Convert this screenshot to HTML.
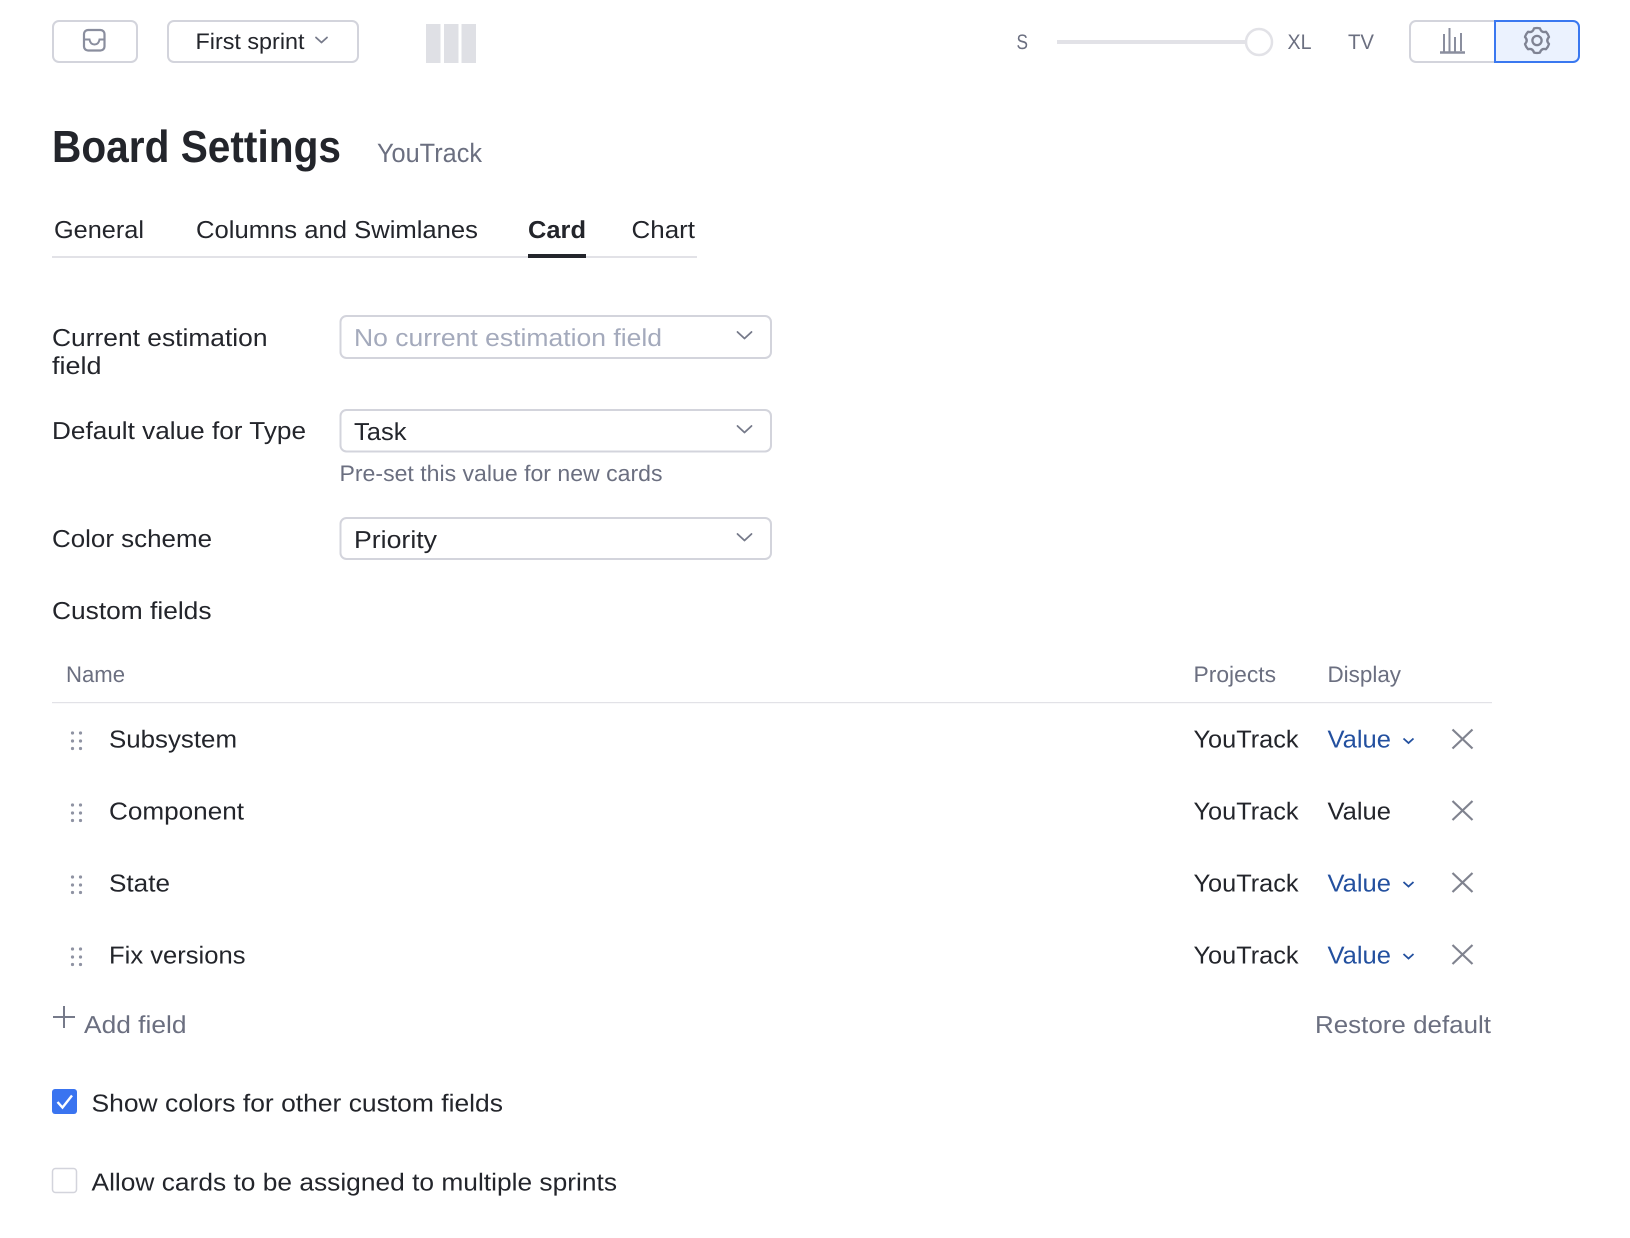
<!DOCTYPE html>
<html lang="en">
<head>
<meta charset="utf-8">
<title>Board Settings</title>
<style>
html,body{margin:0;padding:0;background:#fff;width:1630px;height:1238px;overflow:hidden}
svg{display:block}
text{font-family:"Liberation Sans",sans-serif;font-size:24.5px;fill:#23252b;text-rendering:geometricPrecision}
.s{fill:#6b6f80}
.b{fill:#23509f}
.f{fill:none;stroke:#d3d4dc;stroke-width:2}
.c{fill:none;stroke:#767a8a;stroke-width:1.800;stroke-linecap:round;stroke-linejoin:round}
.x{fill:none;stroke:#80838f;stroke-width:2.200}
.d{fill:#8f93a3}
</style>
</head>
<body>
<svg width="1630" height="1238" viewBox="0 0 1630 1238" xmlns="http://www.w3.org/2000/svg">
<rect x="53" y="21" width="84" height="41" rx="6" class="f"/>
<rect x="84" y="30" width="20.500" height="20.500" rx="4" fill="none" stroke="#8a8e9e" stroke-width="2.200"/>
<path d="M84 39.500h5.500c.5 3 2.200 5 5 5s4.500-2 5-5h5.500" fill="none" stroke="#8a8e9e" stroke-width="2"/>
<rect x="168" y="21" width="190" height="41" rx="6" class="f"/>
<text x="195.500" y="49" style="font-size:22.5px" textLength="109" lengthAdjust="spacingAndGlyphs">First sprint</text>
<path d="M316 37.500l5.500 5 5.500-5" class="c"/>
<rect x="426" y="24" width="14.500" height="39" fill="#dfe0e5"/>
<rect x="444" y="24" width="14.500" height="39" fill="#dfe0e5"/>
<rect x="461.500" y="24" width="14.500" height="39" fill="#dfe0e5"/>

<text x="1016.500" y="49" class="s" style="font-size:21px" textLength="11.500" lengthAdjust="spacingAndGlyphs">S</text>
<rect x="1057" y="40" width="190" height="4" fill="#e2e2e7"/>
<circle cx="1259" cy="42" r="13" fill="#fff" stroke="#e2e2e7" stroke-width="2.500"/>
<text x="1287.500" y="49" class="s" style="font-size:21px" textLength="24" lengthAdjust="spacingAndGlyphs">XL</text>
<text x="1348" y="49" class="s" style="font-size:21px" textLength="26" lengthAdjust="spacingAndGlyphs">TV</text>

<path d="M1495 21h-79a6 6 0 0 0-6 6v29a6 6 0 0 0 6 6h79z" class="f"/>
<path d="M1495 21h78a6 6 0 0 1 6 6v29a6 6 0 0 1-6 6h-78z" fill="#ebf2fe" stroke="#3a78f0" stroke-width="2"/>
<g stroke="#8a8e9e" stroke-width="2" fill="none">
<path d="M1444 34v18M1449.500 28v24M1455 37v15M1461 33v18"/>
<path d="M1440 52.500h25" stroke-width="2.500"/>
</g>
<g transform="translate(1537,40.500)" fill="none" stroke="#7f8393" stroke-width="2.300" stroke-linejoin="round">
<circle r="4.600"/>
<path d="M-3-12.100A12.500 12.500 0 0 1 3-12.100Q4.300-7.500 9-8.700A12.500 12.500 0 0 1 12-3.400Q8.600 0 12 3.400A12.500 12.500 0 0 1 9 8.700Q4.300 7.500 3 12.100A12.500 12.500 0 0 1-3 12.100Q-4.300 7.500-9 8.700A12.500 12.500 0 0 1-12 3.400Q-8.600 0-12-3.400A12.500 12.500 0 0 1-9-8.700Q-4.300-7.500-3-12.100Z"/>
</g>

<text x="52" y="162" style="font-size:45px;font-weight:700" textLength="289" lengthAdjust="spacingAndGlyphs">Board Settings</text>
<text x="377" y="162" class="s" style="font-size:26.500px" textLength="105" lengthAdjust="spacingAndGlyphs">YouTrack</text>

<text x="54" y="238" textLength="90" lengthAdjust="spacingAndGlyphs">General</text>
<text x="196" y="238" textLength="282" lengthAdjust="spacingAndGlyphs">Columns and Swimlanes</text>
<text x="528" y="238" style="font-weight:700" textLength="58" lengthAdjust="spacingAndGlyphs">Card</text>
<text x="631.500" y="238" textLength="63.500" lengthAdjust="spacingAndGlyphs">Chart</text>
<rect x="52" y="256" width="645" height="2" fill="#e2e2e7"/>
<rect x="528" y="254" width="58" height="4" fill="#23252b"/>

<text x="52" y="346" textLength="215.500" lengthAdjust="spacingAndGlyphs">Current estimation</text>
<text x="52" y="374" textLength="49.500" lengthAdjust="spacingAndGlyphs">field</text>
<rect x="340.500" y="316" width="430.500" height="42" rx="6" class="f"/>
<text x="354" y="346" style="fill:#a4aabc" textLength="308" lengthAdjust="spacingAndGlyphs">No current estimation field</text>
<path d="M737.500 332l7 6.500 7-6.500" class="c"/>

<text x="52" y="439" textLength="254" lengthAdjust="spacingAndGlyphs">Default value for Type</text>
<rect x="340.500" y="410" width="430.500" height="41.500" rx="6" class="f"/>
<text x="354" y="440" textLength="52.500" lengthAdjust="spacingAndGlyphs">Task</text>
<path d="M737.500 426l7 6.500 7-6.500" class="c"/>
<text x="339.500" y="481" class="s" style="font-size:22.500px" textLength="323" lengthAdjust="spacingAndGlyphs">Pre-set this value for new cards</text>

<text x="52" y="547" textLength="160" lengthAdjust="spacingAndGlyphs">Color scheme</text>
<rect x="340.500" y="518" width="430.500" height="41" rx="6" class="f"/>
<text x="354" y="548" textLength="83" lengthAdjust="spacingAndGlyphs">Priority</text>
<path d="M737.500 534l7 6.500 7-6.500" class="c"/>

<text x="52" y="619" textLength="159.500" lengthAdjust="spacingAndGlyphs">Custom fields</text>

<text x="66" y="682" class="s" style="font-size:22.500px" textLength="59" lengthAdjust="spacingAndGlyphs">Name</text>
<text x="1193.500" y="682" class="s" style="font-size:22.500px" textLength="82.500" lengthAdjust="spacingAndGlyphs">Projects</text>
<text x="1327.500" y="682" class="s" style="font-size:22.500px" textLength="73.500" lengthAdjust="spacingAndGlyphs">Display</text>
<rect x="52" y="702" width="1440" height="1.200" fill="#e2e2e7"/>

<!-- rows -->
<g>
<circle class="d" cx="72.500" cy="733" r="1.600"/><circle class="d" cx="80.500" cy="733" r="1.600"/><circle class="d" cx="72.500" cy="741" r="1.600"/><circle class="d" cx="80.500" cy="741" r="1.600"/><circle class="d" cx="72.500" cy="748.500" r="1.600"/><circle class="d" cx="80.500" cy="748.500" r="1.600"/>
<text x="109" y="747.500" textLength="128" lengthAdjust="spacingAndGlyphs">Subsystem</text>
<text x="1193.500" y="747.500" textLength="105" lengthAdjust="spacingAndGlyphs">YouTrack</text>
<text x="1327.500" y="747.500" class="b" textLength="63.500" lengthAdjust="spacingAndGlyphs">Value</text>
<path d="M1403.500 738.500l5 4.500 5-4.500" fill="none" stroke="#23509f" stroke-width="1.800"/>
<path d="M1452.500 729.500l20 19M1472.500 729.500l-20 19" class="x"/>
</g>
<g>
<circle class="d" cx="72.500" cy="805" r="1.600"/><circle class="d" cx="80.500" cy="805" r="1.600"/><circle class="d" cx="72.500" cy="813" r="1.600"/><circle class="d" cx="80.500" cy="813" r="1.600"/><circle class="d" cx="72.500" cy="820.500" r="1.600"/><circle class="d" cx="80.500" cy="820.500" r="1.600"/>
<text x="109" y="819.500" textLength="135" lengthAdjust="spacingAndGlyphs">Component</text>
<text x="1193.500" y="819.500" textLength="105" lengthAdjust="spacingAndGlyphs">YouTrack</text>
<text x="1327.500" y="819.500" textLength="63.500" lengthAdjust="spacingAndGlyphs">Value</text>
<path d="M1452.500 801l20 19M1472.500 801l-20 19" class="x"/>
</g>
<g>
<circle class="d" cx="72.500" cy="877" r="1.600"/><circle class="d" cx="80.500" cy="877" r="1.600"/><circle class="d" cx="72.500" cy="885" r="1.600"/><circle class="d" cx="80.500" cy="885" r="1.600"/><circle class="d" cx="72.500" cy="892.500" r="1.600"/><circle class="d" cx="80.500" cy="892.500" r="1.600"/>
<text x="109" y="891.500" textLength="61" lengthAdjust="spacingAndGlyphs">State</text>
<text x="1193.500" y="891.500" textLength="105" lengthAdjust="spacingAndGlyphs">YouTrack</text>
<text x="1327.500" y="891.500" class="b" textLength="63.500" lengthAdjust="spacingAndGlyphs">Value</text>
<path d="M1403.500 882l5 4.500 5-4.500" fill="none" stroke="#23509f" stroke-width="1.800"/>
<path d="M1452.500 873l20 19M1472.500 873l-20 19" class="x"/>
</g>
<g>
<circle class="d" cx="72.500" cy="949" r="1.600"/><circle class="d" cx="80.500" cy="949" r="1.600"/><circle class="d" cx="72.500" cy="957" r="1.600"/><circle class="d" cx="80.500" cy="957" r="1.600"/><circle class="d" cx="72.500" cy="964.500" r="1.600"/><circle class="d" cx="80.500" cy="964.500" r="1.600"/>
<text x="109" y="963.500" textLength="136.500" lengthAdjust="spacingAndGlyphs">Fix versions</text>
<text x="1193.500" y="963.500" textLength="105" lengthAdjust="spacingAndGlyphs">YouTrack</text>
<text x="1327.500" y="963.500" class="b" textLength="63.500" lengthAdjust="spacingAndGlyphs">Value</text>
<path d="M1403.500 954l5 4.500 5-4.500" fill="none" stroke="#23509f" stroke-width="1.800"/>
<path d="M1452.500 945l20 19M1472.500 945l-20 19" class="x"/>
</g>

<path d="M64 1006v22M53 1017h22" fill="none" stroke="#767a8a" stroke-width="2"/>
<text x="84" y="1033" class="s" textLength="102.500" lengthAdjust="spacingAndGlyphs">Add field</text>
<text x="1315" y="1033" class="s" textLength="176" lengthAdjust="spacingAndGlyphs">Restore default</text>

<rect x="52" y="1089" width="25" height="25" rx="3" fill="#3a74f0"/>
<path d="M57.500 1102l5 5.500 9.500-12" fill="none" stroke="#fff" stroke-width="2.400"/>
<text x="91.500" y="1111.500" textLength="411.500" lengthAdjust="spacingAndGlyphs">Show colors for other custom fields</text>

<rect x="52.500" y="1168.500" width="24" height="24" rx="3" fill="#fff" stroke="#d3d4dc" stroke-width="1.500"/>
<text x="91.500" y="1190.500" textLength="525.500" lengthAdjust="spacingAndGlyphs">Allow cards to be assigned to multiple sprints</text>
</svg>
</body>
</html>
